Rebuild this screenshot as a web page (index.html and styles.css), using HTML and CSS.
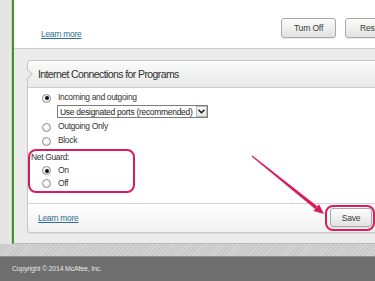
FILE: index.html
```html
<!DOCTYPE html>
<html lang="en">
<head>
    <meta charset="UTF-8">
    <meta name="viewport" content="width=device-width, initial-scale=1.0">
    <title>Firewall - Internet Connections for Programs</title>
    <link rel="stylesheet" href="styles.css">
</head>
<body>
<div class="screen">

    <div class="shell">
        <div class="rail"></div>

        <div class="window">
            <!-- Top section (end of the previous block) -->
            <div class="intro">
                <a href="#" class="link">Learn more</a>
                <div class="actions">
                    <button class="btn btn-off">Turn Off</button>
                    <button class="btn btn-restore">Restore Defaults</button>
                </div>
            </div>

            <!-- Program connections panel -->
            <div class="stage">
                <section class="panel">
                    <header class="panel-head">Internet Connections for Programs</header>

                    <div class="panel-body">
                        <label class="option">
                            <input type="radio" name="access" checked>
                            <span>Incoming and outgoing</span>
                        </label>
                        <div class="select">
                            <span>Use designated ports (recommended)</span>
                            <span class="select-btn">
                                <svg width="7" height="5" viewBox="0 0 7 5"><polyline points="0.5,0.8 3.5,3.8 6.5,0.8" fill="none" stroke="#111" stroke-width="1.4"/></svg>
                            </span>
                        </div>
                        <label class="option option-gap">
                            <input type="radio" name="access">
                            <span>Outgoing Only</span>
                        </label>
                        <label class="option">
                            <input type="radio" name="access">
                            <span>Block</span>
                        </label>

                        <div class="callout callout-guard">
                            <div class="guard-title">Net Guard:</div>
                            <label class="option option-tight">
                                <input type="radio" name="guard" checked>
                                <span>On</span>
                            </label>
                            <label class="option option-tight">
                                <input type="radio" name="guard">
                                <span>Off</span>
                            </label>
                        </div>
                    </div>

                    <footer class="panel-foot">
                        <a href="#" class="link">Learn more</a>
                        <span class="callout callout-save">
                            <button class="btn btn-save">Save</button>
                        </span>
                    </footer>
                </section>
            </div>
        </div>
    </div>

    <div class="hatch"></div>

    <footer class="site-foot">Copyright © 2014 McAfee, Inc.</footer>

    <!-- Annotation arrow pointing at Save -->
    <svg class="arrow" width="375" height="281" viewBox="0 0 375 281">
        <polygon points="251.6,156.5 252.4,155.5 317.3,206.3 315.1,209.1" fill="#d81d5f"/>
        <polygon points="324,214 313.4,211.1 319,204.2" fill="#d81d5f"/>
    </svg>
</div>
</body>
</html>
```

FILE: styles.css
```css
/* Colours */
:root {
    --green: #3c9a2c;
    --stage: #ebebeb;
    --line: #c6c6c6;
    --text: #333333;
    --link: #2d6f92;
    --pink: #d81d5f;
}

* {
    margin: 0;
    padding: 0;
    box-sizing: border-box;
}

body {
    font-family: "Liberation Sans", Arial, sans-serif;
    font-size: 8.5px;
    color: var(--text);
    background: #ffffff;
}

.screen {
    position: relative;
    width: 375px;
    height: 281px;
    overflow: hidden;
    display: flex;
    flex-direction: column;
}

/* Main area with the green edge */
.shell {
    display: flex;
    height: 244px;
}

.rail {
    width: 12px;
    background: #e3e3e3;
    border-right: 1px solid #cdcdcd;
    box-shadow: inset -2px 0 0 #e9e9e9;
}

.window {
    flex: 1;
    display: flex;
    flex-direction: column;
    border-left: 2px solid var(--green);
    border-bottom: 1px solid #bcbcbc;
    min-width: 0;
}

.intro {
    height: 49px;
    display: flex;
    align-items: flex-end;
    padding: 19px 0 10px 27px;
    background: #ffffff;
    border-bottom: 1px solid #cfcfcf;
}

.intro .link {
    line-height: 10px;
    margin-bottom: -1px;
}

.actions {
    display: flex;
    gap: 9px;
    margin-left: auto;
    margin-right: -60px;
    flex-shrink: 0;
}

.link {
    color: var(--link);
    text-decoration: underline;
    font-size: 8.5px;
    letter-spacing: -0.3px;
}

.btn {
    font-family: inherit;
    font-size: 8.5px;
    letter-spacing: -0.2px;
    color: #3a3a3a;
    height: 20px;
    border: 1px solid #a8a8a8;
    border-radius: 3px;
    background: linear-gradient(#fdfdfd, #e2e2e2);
    box-shadow: 0 1px 1px rgba(0, 0, 0, 0.08);
}

.btn-off { width: 55px; }
.btn-restore {
    width: 90px;
    text-align: left;
    padding-left: 14px;
}

/* Gray stage holding the panel */
.stage {
    flex: 1;
    display: flex;
    background: var(--stage);
    padding: 11px 0 10px 13px;
}

.panel {
    flex: 1;
    display: flex;
    flex-direction: column;
    background: #ffffff;
    border: 1px solid var(--line);
    border-right: none;
    border-radius: 4px 0 0 4px;
    box-shadow: 0 1px 1px rgba(0, 0, 0, 0.06);
}

.panel-head {
    position: relative;
    height: 27px;
    display: flex;
    align-items: center;
    padding-left: 10px;
    font-size: 10.5px;
    letter-spacing: -0.6px;
    color: #2e2e2e;
    background: linear-gradient(#fbfbfb, #e8e8e8);
    border-bottom: 1px solid #cdcdcd;
    border-radius: 4px 0 0 0;
}

/* little tab notch on the left edge */
.panel-head::before {
    content: '';
    position: absolute;
    left: -5px;
    top: 9px;
    width: 7px;
    height: 7px;
    background: var(--stage);
    border-top: 1px solid var(--line);
    border-right: 1px solid var(--line);
    transform: rotate(45deg);
}

.panel-body {
    flex: 1;
    padding-top: 2px;
}

.option {
    display: flex;
    align-items: center;
    height: 14px;
    padding-left: 14px;
    font-size: 8.5px;
    letter-spacing: -0.35px;
}

.option-gap { margin-top: 1px; }
.option-tight { height: 13px; padding-left: 12px; }

.option input {
    appearance: none;
    -webkit-appearance: none;
    width: 9px;
    height: 9px;
    margin: 2px 7px 0 0;
    border: 1px solid #8c8c8c;
    border-radius: 50%;
    background: radial-gradient(circle at 40% 35%, #ffffff, #e4e4e4);
    display: grid;
    place-items: center;
}

.option input:checked::after {
    content: '';
    width: 4px;
    height: 4px;
    border-radius: 50%;
    background: #111111;
}

.select {
    display: flex;
    align-items: center;
    justify-content: space-between;
    width: 151px;
    height: 13px;
    margin: 1px 0 0 29px;
    padding-left: 2px;
    border: 1px solid #7c7c7c;
    font-size: 8.5px;
    letter-spacing: -0.3px;
    color: #1e1e1e;
    background: #ffffff;
}

.select-btn {
    width: 11px;
    height: 11px;
    display: grid;
    place-items: center;
    border: 1px solid #b9b9b9;
    background: linear-gradient(#fafafa, #e6e6e6);
}

/* Pink annotation boxes */
.callout {
    border: 2px solid var(--pink);
    border-radius: 8px;
}

.callout-guard {
    width: 107px;
    margin-top: 2px;
    padding: 0 0 2px 0;
}

.guard-title {
    line-height: 12px;
    padding-left: 1px;
    font-size: 8.5px;
    letter-spacing: -0.35px;
}

.panel-foot {
    height: 29px;
    display: flex;
    align-items: center;
    padding-left: 10px;
    border-top: 1px solid #d3d3d3;
    background: linear-gradient(#ffffff, #f1f1f1);
    border-radius: 0 0 0 4px;
}

.callout-save {
    margin-left: auto;
    width: 50px;
    height: 26px;
    padding: 1px 0 0 3px;
}

.btn-save {
    width: 42px;
    height: 19px;
}

/* Bottom strips */
.hatch {
    height: 13px;
    background: repeating-linear-gradient(135deg, #d6d6d6 0 1px, #c9c9c9 1px 3px);
    border-bottom: 1px solid #8a8a8a;
}

.site-foot {
    flex: 1;
    display: flex;
    align-items: center;
    padding: 0 0 2px 12px;
    background: #6e6e6e;
    color: #e6e6e6;
    font-size: 7px;
    letter-spacing: -0.2px;
}

.arrow {
    position: absolute;
    left: 0;
    top: 0;
    pointer-events: none;
}
```
